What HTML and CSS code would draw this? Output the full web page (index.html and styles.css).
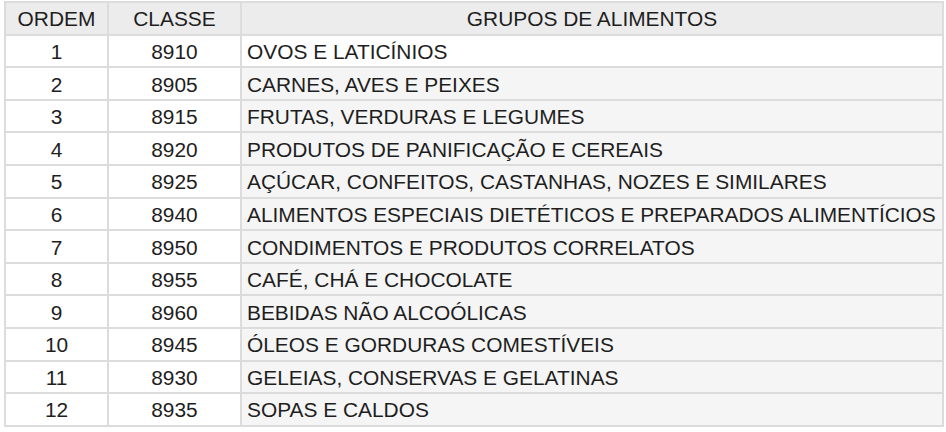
FILE: index.html
```html
<!DOCTYPE html>
<html lang="pt">
<head>
<meta charset="utf-8">
<link rel="stylesheet" href="styles.css">
</head>
<body>
<table class="grid">
  <thead>
    <tr><th class="c-ord">ORDEM</th><th class="c-cls">CLASSE</th><th class="c-grp">GRUPOS DE ALIMENTOS</th></tr>
  </thead>
  <tbody>
    <tr class="hl"><td class="num">1</td><td class="num">8910</td><td class="txt">OVOS E LATICÍNIOS</td></tr>
    <tr><td class="num">2</td><td class="num">8905</td><td class="txt">CARNES, AVES E PEIXES</td></tr>
    <tr><td class="num">3</td><td class="num">8915</td><td class="txt">FRUTAS, VERDURAS E LEGUMES</td></tr>
    <tr><td class="num">4</td><td class="num">8920</td><td class="txt">PRODUTOS DE PANIFICAÇÃO E CEREAIS</td></tr>
    <tr><td class="num">5</td><td class="num">8925</td><td class="txt">AÇÚCAR, CONFEITOS, CASTANHAS, NOZES E SIMILARES</td></tr>
    <tr><td class="num">6</td><td class="num">8940</td><td class="txt">ALIMENTOS ESPECIAIS DIETÉTICOS E PREPARADOS ALIMENTÍCIOS</td></tr>
    <tr><td class="num">7</td><td class="num">8950</td><td class="txt">CONDIMENTOS E PRODUTOS CORRELATOS</td></tr>
    <tr><td class="num">8</td><td class="num">8955</td><td class="txt">CAFÉ, CHÁ E CHOCOLATE</td></tr>
    <tr><td class="num">9</td><td class="num">8960</td><td class="txt">BEBIDAS NÃO ALCOÓLICAS</td></tr>
    <tr><td class="num">10</td><td class="num">8945</td><td class="txt">ÓLEOS E GORDURAS COMESTÍVEIS</td></tr>
    <tr><td class="num">11</td><td class="num">8930</td><td class="txt">GELEIAS, CONSERVAS E GELATINAS</td></tr>
    <tr><td class="num">12</td><td class="num">8935</td><td class="txt">SOPAS E CALDOS</td></tr>
  </tbody>
</table>
</body>
</html>
```
FILE: styles.css
```css
html, body {
  margin: 0;
  background: #ffffff;
}
body {
  padding: 1px 0 0 4px;
  font-family: "Liberation Sans", Arial, sans-serif;
  font-size: 20.9px;
  color: #1e1e1e;
}
.grid {
  border-collapse: collapse;
  width: 940px;
  table-layout: fixed;
}
.grid th, .grid td {
  border: 2px solid #dcdcdc;
  height: 27.6px;
  padding: 3px 5px 0;
  line-height: 1;
  font-weight: normal;
  white-space: nowrap;
  vertical-align: middle;
  background: #ffffff;
}
.grid th {
  background: #ececec;
  text-align: center;
}
.c-ord { width: 91px; }
.c-cls { width: 121px; }
.grid td.num { text-align: center; }
.grid td.txt { text-align: left; background: #f5f5f5; }
.grid tr.hl td.txt { background: #ffffff; }
```
